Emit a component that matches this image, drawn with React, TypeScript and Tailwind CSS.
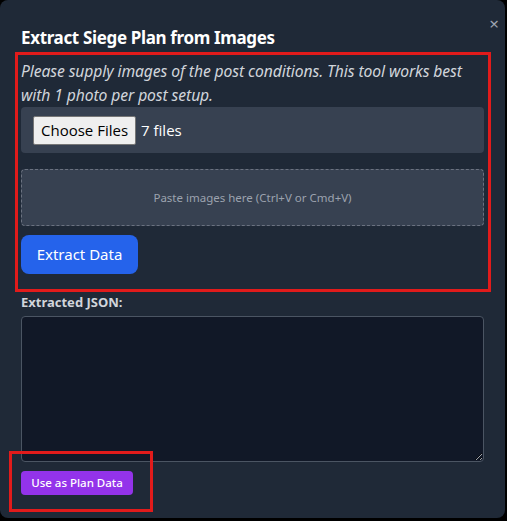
import React from "react";

export default function App() {
  return (
    <div className="w-[507px] h-[521px] bg-black overflow-hidden" style={{ fontFamily: '"Noto Sans", "Open Sans", sans-serif' }}>
      <div className="relative w-[505px] h-[518px] bg-[#1f2937] rounded-lg px-[21px] pt-[26px]">
        <button className="absolute right-[6px] top-[15px] text-[#9ca3af] text-[17px] leading-none">×</button>
        <h2 className="text-white font-bold text-[17px] leading-[24px] tracking-[-0.35px]">Extract Siege Plan from Images</h2>

        <p className="mt-[9px] max-w-[455px] italic text-[#d1d5db] text-[15.7px] leading-[24px] tracking-[-0.1px]">
          Please supply images of the post conditions. This tool works best with 1 photo per post setup.
        </p>

        <div className="mt-0 h-[46px] bg-[#374151] rounded flex items-center px-3">
          <span className="h-[29px] px-[7px] flex items-center bg-[#efefef] border border-[#767676] text-black text-[15px] rounded-[2px]" style={{ fontFamily: '"Open Sans", sans-serif' }}>
            Choose Files
          </span>
          <span className="ml-[5px] text-white text-[15px]" style={{ fontFamily: '"Open Sans", sans-serif' }}>7 files</span>
        </div>

        <div className="mt-4 h-[57px] bg-[#374151] border border-dashed border-[#6b7280] rounded flex items-center justify-center text-[#9ca3af] text-[11.5px]">
          Paste images here (Ctrl+V or Cmd+V)
        </div>

        <button className="mt-[9px] h-[39px] w-[117px] bg-[#2563eb] text-white text-[15px] rounded-lg">
          Extract Data
        </button>

        <div className="mt-[20px] text-[#d1d5db] font-bold text-[13px] leading-[16px]">Extracted JSON:</div>

        <textarea className="mt-[6px] block w-full h-[146px] bg-[#111827] border border-[#4b5563] rounded resize-y outline-none" />

        <button className="mt-[9px] h-[24px] w-[112px] bg-[#9333ea] text-white font-medium text-[11.5px] rounded">
          Use as Plan Data
        </button>

        <div className="absolute left-[15px] top-[52px] w-[476px] h-[240px] border-[3px] border-[#e11b1b] pointer-events-none" />
        <div className="absolute left-[9px] top-[451px] w-[144px] h-[61px] border-[3px] border-[#e11b1b] pointer-events-none" />
      </div>
    </div>
  );
}
